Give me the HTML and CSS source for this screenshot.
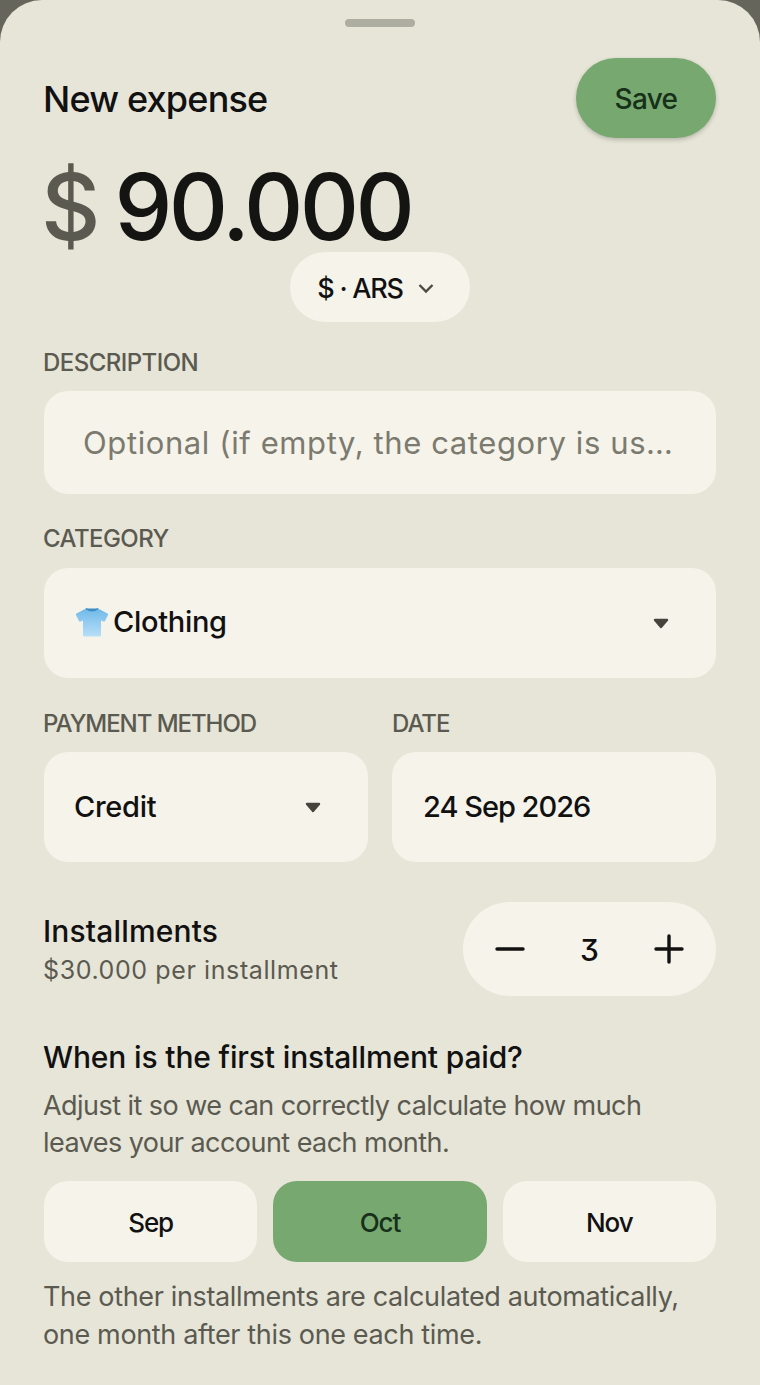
FILE: index.html
```html
<!DOCTYPE html>
<html lang="en">
<head>
<meta charset="utf-8">
<title>New expense</title>
<link rel="stylesheet" href="styles.css">
</head>
<body>
<main class="sheet">
  <div class="handle"></div>
  <header class="top">
    <h1 class="title">New expense</h1>
    <button class="save">Save</button>
  </header>
  <div class="amount"><span class="sign">$</span><span class="value">90.000</span></div>
  <div class="currency-wrap">
    <button class="currency">$ · ARS
      <svg class="chev" viewBox="0 0 18 18" width="18" height="18"><path d="M2.500 5 9 11.500 15.500 5" fill="none" stroke="#4c4b42" stroke-width="2.400"/></svg>
    </button>
  </div>
  <label class="label first">DESCRIPTION</label>
  <div class="field desc"><span class="placeholder">Optional (if empty, the category is us…</span></div>
  <label class="label cat">CATEGORY</label>
  <div class="field select">
    <span class="cat-value">
      <svg class="shirt" viewBox="0 0 34 30" width="34" height="30">
        <defs><linearGradient id="sg" x1="0" y1="0" x2="0" y2="1"><stop offset="0" stop-color="#6fb9e9"/><stop offset="1" stop-color="#b8dff8"/></linearGradient></defs>
        <path d="M11 1.500 1.500 6.500Q.5 7 1 8l3 6q.5 1 1.500.5L8 13.500V28q0 1.500 1.500 1.500h15Q26 29.500 26 28V13.500l2.500 1q1 .5 1.500-.5l3-6q.5-1-.5-1.500L23 1.500q-6 2.500-12 0Z" fill="url(#sg)"/>
        <path d="M11 1.500q6 5 12 0" fill="#3f8cc4" stroke="#3f8cc4" stroke-width="1.200"/>
      </svg>Clothing</span>
    <svg class="caret" viewBox="0 0 16 11" width="16" height="11"><path d="M2 2h12L8 9Z" fill="#45443c" stroke="#45443c" stroke-width="2.400" stroke-linejoin="round"/></svg>
  </div>
  <div class="pair">
    <div class="col">
      <label class="label tight">PAYMENT METHOD</label>
      <div class="field select"><span class="credit">Credit</span><svg class="caret" viewBox="0 0 16 11" width="16" height="11"><path d="M2 2h12L8 9Z" fill="#45443c" stroke="#45443c" stroke-width="2.400" stroke-linejoin="round"/></svg></div>
    </div>
    <div class="col">
      <label class="label tight date-label">DATE</label>
      <div class="field select"><span class="date">24 Sep 2026</span></div>
    </div>
  </div>
  <section class="install">
    <div>
      <div class="install-title">Installments</div>
      <div class="install-sub">$30.000 per installment</div>
    </div>
    <div class="stepper">
      <svg viewBox="0 0 30 30" width="30" height="30"><path d="M2 15h26" stroke="#111" stroke-width="3.400" stroke-linecap="round"/></svg>
      <span class="count">3</span>
      <svg viewBox="0 0 30 30" width="30" height="30"><path d="M2 15h26M15 2v26" stroke="#111" stroke-width="3.400" stroke-linecap="round"/></svg>
    </div>
  </section>
  <h2 class="q">When is the first installment paid?</h2>
  <p class="para">Adjust it so we can correctly calculate how much leaves your account each month.</p>
  <div class="months">
    <button class="month">Sep</button>
    <button class="month on">Oct</button>
    <button class="month">Nov</button>
  </div>
  <p class="para foot">The other installments are calculated automatically, one month after this one each time.</p>
</main>
</body>
</html>
```
FILE: styles.css
```css
* { box-sizing: border-box; }
html, body { margin: 0; height: 100%; }
body { background: #66655c; font-family: Inter, "Liberation Sans", sans-serif; color: #111; overflow: hidden; }
button { font-family: inherit; border: 0; padding: 0; }
.sheet { background: #e6e5d8; border-radius: 42px 42px 0 0; height: 1385px; padding: 19px 44px 0; }
.handle { width: 70px; height: 8px; border-radius: 4px; background: #aeada1; margin: 0 auto; }
.top { display: flex; justify-content: space-between; align-items: center; margin-top: 31px; height: 80px; }
.title { font-size: 36px; font-weight: 500; letter-spacing: -.8px; margin: 2px 0 0 -1px; }
.save { width: 140px; height: 80px; border-radius: 40px; background: #77a86f; color: #16301a; font-size: 28px; font-weight: 500; letter-spacing: -.7px; padding-top: 2px; box-shadow: 0 2px 4px rgba(60,60,50,.28); }
.amount { display: flex; align-items: center; gap: 22px; height: 114px; padding-top: 24px; }
.sign { font-size: 92px; font-weight: 500; color: #5b5a50; line-height: 1; margin-left: -3px; letter-spacing: -2px; }
.value { font-size: 92px; font-weight: 500; line-height: 1; letter-spacing: -3.6px; color: #141412; margin-left: -6px; }
.currency-wrap { display: flex; justify-content: center; }
.currency { width: 180px; height: 70px; border-radius: 35px; background: #f5f3ea; display: flex; align-items: center; justify-content: center; gap: 14px; font-size: 27px; font-weight: 500; letter-spacing: -1.2px; color: #111; padding: 3px 8px 0 0; }
.label { display: block; font-size: 24px; font-weight: 500; letter-spacing: -.55px; color: #5b5a50; line-height: 30px; margin: 0 0 14px -1px; }
.label.first { margin-top: 26px; margin-bottom: 13px; }
.label.cat { margin-top: 30px; margin-bottom: 14px; }
.label.tight { letter-spacing: -1.05px; margin-bottom: 13px; }
.label.date-label { margin-left: 0; }
.field { background: #f5f3ea; border-radius: 24px; }
.desc { height: 103px; display: flex; align-items: center; padding-left: 39px; }
.placeholder { font-size: 31px; letter-spacing: .6px; color: #7b7a6f; white-space: nowrap; }
.select { height: 110px; display: flex; align-items: center; justify-content: space-between; padding: 0 47px 2px 31px; font-size: 29px; font-weight: 500; letter-spacing: -.3px; }
.cat-value { display: flex; align-items: center; margin-top: -2px; }
.shirt { margin-right: 4px; margin-top: 2px; }
.caret { display: block; margin-top: 2px; }
.credit { margin-left: -1px; }
.date { letter-spacing: -1px; }
.pair { display: grid; grid-template-columns: 1fr 1fr; gap: 24px; margin-top: 31px; }
.install { display: flex; justify-content: space-between; align-items: center; margin-top: 40px; height: 94px; }
.install-title { font-size: 30px; font-weight: 500; letter-spacing: .15px; line-height: 42px; margin-left: -1px; }
.install-sub { font-size: 25px; letter-spacing: .6px; color: #5b5a50; line-height: 36px; margin-left: -1px; }
.stepper { width: 253px; height: 94px; border-radius: 47px; background: #f5f3ea; display: flex; align-items: center; justify-content: space-between; padding: 0 32px; }
.count { font-size: 30px; font-weight: 500; font-feature-settings: "cv09"; margin-top: 2px; }
.q { font-size: 30px; font-weight: 500; letter-spacing: -.15px; margin: 42px 0 0 -1px; line-height: 38px; }
.para { font-size: 27px; line-height: 37px; letter-spacing: -.55px; color: #5b5a50; margin: 11px 0 0 -1px; }
.months { display: grid; grid-template-columns: repeat(3, 1fr); gap: 16px; margin-top: 20px; }
.month { height: 81px; border-radius: 24px; background: #f5f3ea; font-size: 26px; font-weight: 500; letter-spacing: -1.1px; color: #111; padding-top: 1px; }
.month.on { background: #77a86f; color: #16301a; }
.para.foot { margin-top: 16px; letter-spacing: -.35px; line-height: 37.500px; }
```
